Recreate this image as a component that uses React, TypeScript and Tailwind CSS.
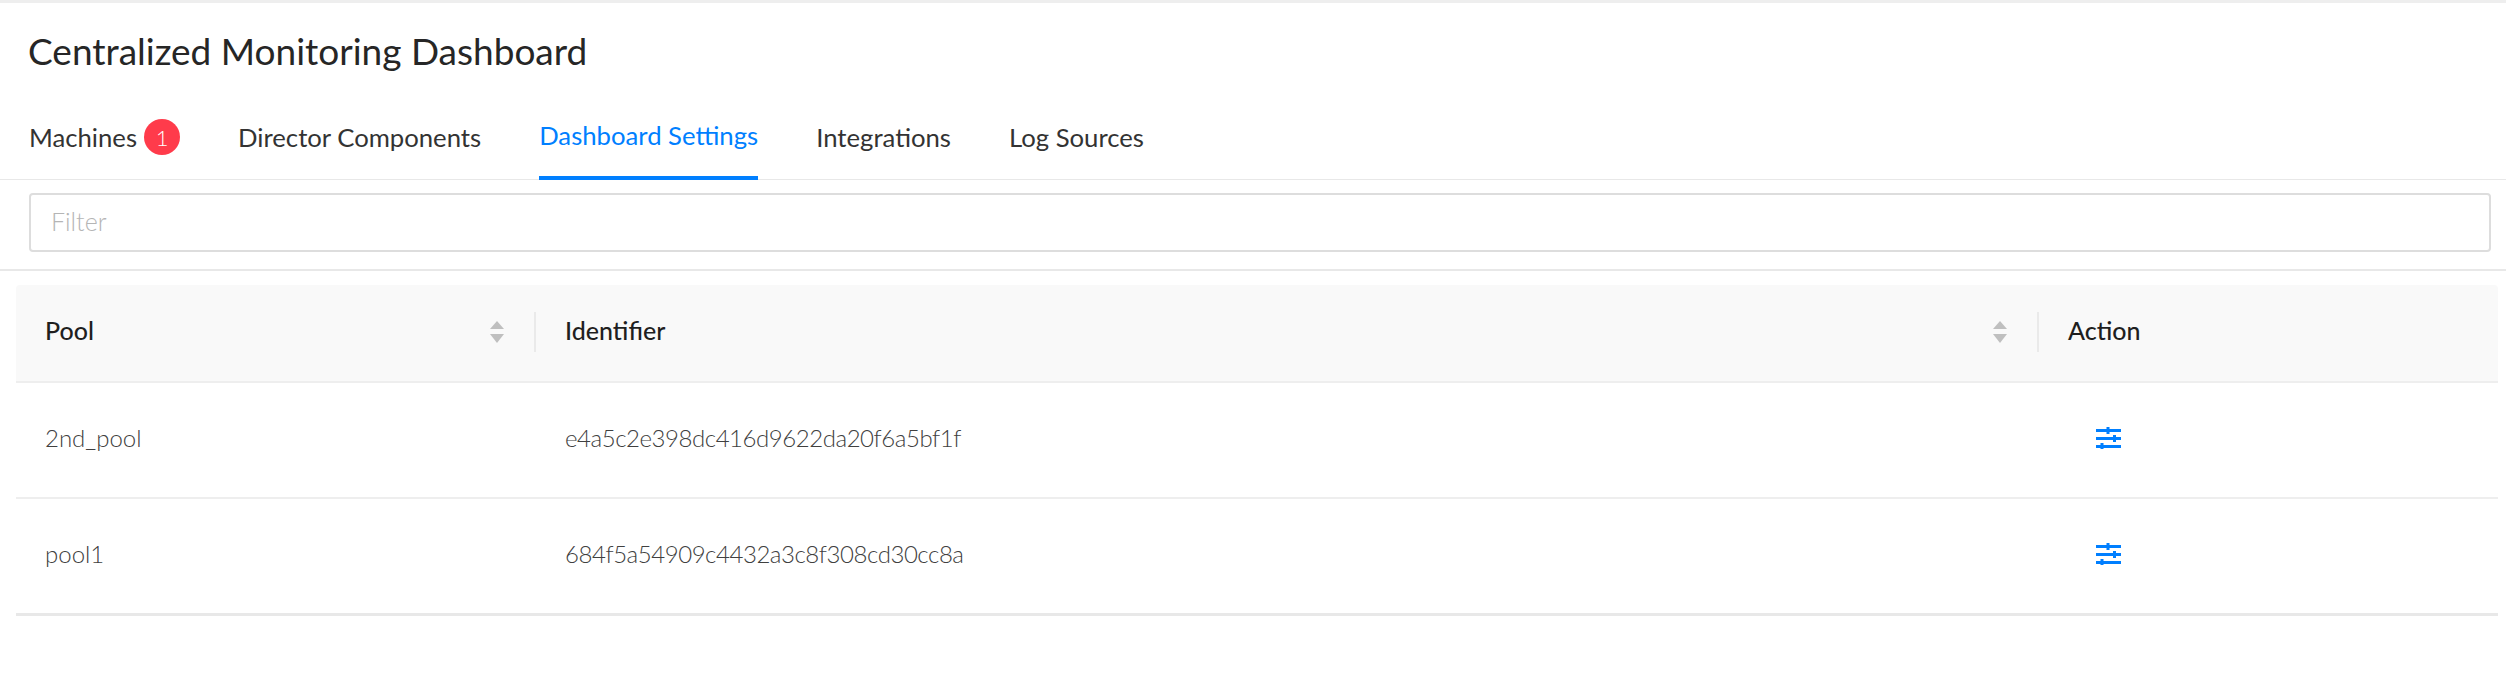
const FONT = "font-['Lato','Noto_Sans',sans-serif]";

function Sort() {
  return (
    <svg width="14" height="22" viewBox="0 0 14 22" className="block">
      <path d="M7 0 L14 8 L0 8 Z" fill="#bfbfbf" />
      <path d="M0 13 L14 13 L7 22 Z" fill="#bfbfbf" />
    </svg>
  );
}

function Sliders() {
  return (
    <svg width="25" height="24" viewBox="0 0 25 24" className="block">
      <g fill="#007fff">
        <rect x="0" y="4" width="25" height="3" />
        <rect x="0" y="12" width="25" height="3" />
        <rect x="0" y="20" width="25" height="3" />
        <rect x="10.5" y="2" width="3" height="7" />
        <rect x="17" y="10" width="3" height="7" />
        <rect x="4.5" y="18" width="3" height="6" />
      </g>
    </svg>
  );
}

const tabs = [
  { label: "Machines", badge: true },
  { label: "Director Components" },
  { label: "Dashboard Settings", active: true },
  { label: "Integrations" },
  { label: "Log Sources" },
];

const rows = [
  { pool: "2nd_pool", id: "e4a5c2e398dc416d9622da20f6a5bf1f", h: "h-[116px]", line: "border-b-2 border-[#eeeeee]" },
  { pool: "pool1", id: "684f5a54909c4432a3c8f308cd30cc8a", h: "h-[117px]", line: "border-b-[3px] border-[#e8e8e8]" },
];

export default function App() {
  return (
    <div className={`${FONT} w-[2506px] h-[696px] bg-white border-t-[3px] border-[#eeeeee] overflow-hidden`}>
      <h1 className="pl-[28px] pt-[26px] h-[97px] text-[37px] leading-[44px] font-normal text-[#262626]">
        Centralized Monitoring Dashboard
      </h1>
      <div className="flex gap-[58px] pl-[29px] h-[80px] border-b border-[#e8e8e8]">
        {tabs.map((t) => (
          <div
            key={t.label}
            className={`flex items-center gap-[7px] h-[80px] pb-[6px] text-[25.7px] ${
              t.active ? "border-b-[4px] border-[#007fff] text-[#007fff]" : "text-[#333333]"
            }`}
          >
            <span>{t.label}</span>
            {t.badge && (
              <span className="flex w-[36px] h-[36px] items-center justify-center rounded-full bg-[#ff3b4b] text-[22px] font-light text-white">
                1
              </span>
            )}
          </div>
        ))}
      </div>
      <div className="pl-[29px] pr-[15px] pt-[13px] pb-[17px] border-b-2 border-[#e8e8e8]">
        <input
          readOnly
          placeholder="Filter"
          className="block w-full h-[59px] pl-[20px] pb-[3px] text-[25px] font-light border-2 border-[#dddddd] rounded-[4px] outline-none placeholder:text-[#b5b5b5]"
        />
      </div>
      <div className="mx-[16px] mt-[14px] w-[2482px]">
        <div className="grid grid-cols-[520px_1503px_1fr] h-[98px] pb-[2px] bg-[#f9f9f9] border-b-2 border-[#eeeeee] rounded-t-[4px] text-[25px] font-medium text-[#1f1f1f]">
          <div className="flex items-center justify-between pl-[29px]">
            <span className="pb-[2px]">Pool</span>
            <div className="flex items-center gap-[30px]">
              <Sort />
              <span className="block w-[2px] h-[40px] bg-[#eaeaea]" />
            </div>
          </div>
          <div className="flex items-center justify-between pl-[29px]">
            <span className="pb-[2px]">Identifier</span>
            <div className="flex items-center gap-[30px]">
              <Sort />
              <span className="block w-[2px] h-[40px] bg-[#eaeaea]" />
            </div>
          </div>
          <div className="flex items-center pl-[29px]">
            <span className="pb-[2px]">Action</span>
          </div>
        </div>
        {rows.map((r) => (
          <div
            key={r.pool}
            className={`grid grid-cols-[520px_1503px_1fr] items-center ${r.h} pb-[4px] text-[24px] font-light text-[#404040] ${r.line}`}
          >
            <div className="pl-[29px]">{r.pool}</div>
            <div className="pl-[29px] tracking-[-0.45px]">{r.id}</div>
            <div className="pl-[57px] pb-[3px]">
              <Sliders />
            </div>
          </div>
        ))}
      </div>
    </div>
  );
}
